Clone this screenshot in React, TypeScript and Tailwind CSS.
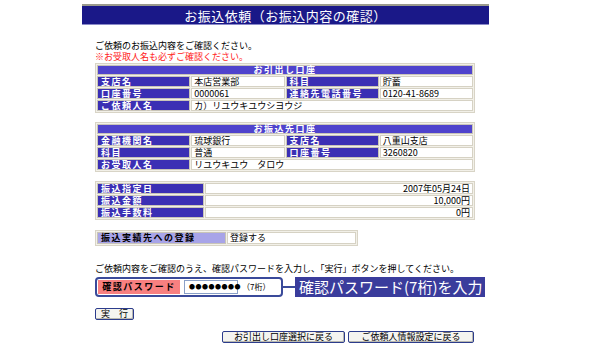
const font = "font-['MS_PGothic','Noto_Sans_CJK_JP',sans-serif]";

const labelCls =
  "bg-[#3b2fb4] text-white font-bold tracking-[1.5px] px-[3px] h-[9px] leading-[9px] border border-[#c8c4b8] whitespace-nowrap align-middle";
const valueCls =
  "bg-white text-black px-[2px] h-[9px] leading-[9px] border border-[#d6d2c4] whitespace-nowrap align-middle";
const headCls =
  "bg-[#4f43cc] text-white font-bold tracking-[1.5px] text-center h-[8px] leading-[8px] border border-[#c8c4b8]";

function Table({ children }: { children: React.ReactNode }) {
  return (
    <table className="w-[380px] border-separate border-spacing-[1px] bg-[#f2f0e8] border border-[#d8d4c6] table-fixed text-[9px]">
      <tbody>{children}</tbody>
    </table>
  );
}

function Button({ label, w }: { label: string; w: string }) {
  return (
    <button
      className={`${w} h-[12px] bg-[#f4f4f0] border border-[#2c3c8c] rounded-[2px] text-[9px] leading-[10px] text-black shadow-[inset_-1px_-1px_0_#b8b8b0] whitespace-nowrap`}
    >
      {label}
    </button>
  );
}

export default function App() {
  return (
    <div className={`w-[600px] h-[352px] bg-white overflow-hidden ${font} text-[9px] text-black`}>
      <div className="ml-[82px] w-[407px] pt-[4px]">
        <div className="h-[2px] bg-[#9a9a8c]" />
        <div className="h-[19px] bg-[#1a1888] border-b border-[#8a8ac8] text-white text-[13px] leading-[19px] text-center tracking-[0.5px]">
          お振込依頼（お振込内容の確認）
        </div>

        <div className="ml-[13px] mt-[15px]">
          <div className="leading-[11px]">ご依頼のお振込内容をご確認ください。</div>
          <div className="leading-[11px] text-[#ff2020]">※お受取人名も必ずご確認ください。</div>

          <div className="mt-[1px]">
            <Table>
              <tr>
                <td colSpan={4} className={headCls}>お引出し口座</td>
              </tr>
              <tr>
                <td className={`${labelCls} w-[62px]`}>支店名</td>
                <td className={`${valueCls} w-[124px]`}>本店営業部</td>
                <td className={`${labelCls} w-[94px]`}>科目</td>
                <td className={valueCls}>貯蓄</td>
              </tr>
              <tr>
                <td className={labelCls}>口座番号</td>
                <td className={valueCls}>0000061</td>
                <td className={labelCls}>連絡先電話番号</td>
                <td className={valueCls}>0120-41-8689</td>
              </tr>
              <tr>
                <td className={labelCls}>ご依頼人名</td>
                <td colSpan={3} className={valueCls}>カ）リユウキユウシヨウジ</td>
              </tr>
            </Table>
          </div>

          <div className="mt-[9px]">
            <Table>
              <tr>
                <td colSpan={4} className={headCls}>お振込先口座</td>
              </tr>
              <tr>
                <td className={`${labelCls} w-[112px]`}>金融機関名</td>
                <td className={`${valueCls} w-[76px]`}>琉球銀行</td>
                <td className={`${labelCls} w-[96px]`}>支店名</td>
                <td className={valueCls}>八重山支店</td>
              </tr>
              <tr>
                <td className={labelCls}>科目</td>
                <td className={valueCls}>普通</td>
                <td className={labelCls}>口座番号</td>
                <td className={valueCls}>3260820</td>
              </tr>
              <tr>
                <td className={labelCls}>お受取人名</td>
                <td colSpan={3} className={valueCls}>リユウキユウ　タロウ</td>
              </tr>
            </Table>
          </div>

          <div className="mt-[9px]">
            <Table>
              <tr>
                <td className={`${labelCls} w-[107px] !h-[8px]`}>振込指定日</td>
                <td className={`${valueCls} text-right !h-[8px]`}>2007年05月24日</td>
              </tr>
              <tr>
                <td className={`${labelCls} !h-[8px]`}>振込金額</td>
                <td className={`${valueCls} text-right !h-[8px]`}>10,000円</td>
              </tr>
              <tr>
                <td className={`${labelCls} !h-[8px]`}>振込手数料</td>
                <td className={`${valueCls} text-right !h-[8px]`}>0円</td>
              </tr>
            </Table>
          </div>

          <table className="mt-[10px] w-[263px] border-separate border-spacing-[1px] bg-[#f2f0e8] border border-[#d8d4c6] table-fixed text-[9px]">
            <tbody>
              <tr>
                <td className="w-[129px] bg-[#a8a4e8] text-black font-bold tracking-[1.5px] px-[3px] h-[10px] leading-[10px] border border-[#c8c4b8]">
                  振込実績先への登録
                </td>
                <td className="bg-white px-[2px] h-[10px] leading-[10px] border border-[#d6d2c4]">登録する</td>
              </tr>
            </tbody>
          </table>

          <div className="mt-[18px] leading-[10px] whitespace-nowrap">
            ご依頼内容をご確認のうえ、確認パスワードを入力し、「実行」ボタンを押してください。
          </div>

          <div className="mt-[3px] flex items-center">
            <div className="w-[188px] h-[20px] border-2 border-[#3a4a9a] rounded-[4px] flex items-center p-[1px]">
              <div className="w-[82px] h-full bg-[#f88080] font-bold tracking-[1.5px] flex items-center justify-center">
                確認パスワード
              </div>
              <div className="ml-[4px] w-[54px] h-[14px] bg-white border border-[#8aa0c8] flex items-center pl-[4px] text-[6px] tracking-[0.5px] leading-none">
                ●●●●●●●●
              </div>
              <div className="ml-[4px] text-[8px]">（7桁）</div>
            </div>
            <div className="w-[12px] h-[2px] bg-[#3a4a9a]" />
            <div className="w-[190px] h-[20px] bg-[#3a3c9c] text-white text-[15px] leading-[20px] pl-[4px] whitespace-nowrap">
              確認パスワード(7桁)を入力
            </div>
          </div>

          <div className="mt-[11px] flex">
            <Button label="実　行" w="w-[39px]" />
          </div>

          <div className="mt-[11px] ml-[127px] flex gap-[3px]">
            <Button label="お引出し口座選択に戻る" w="w-[123px]" />
            <Button label="ご依頼人情報設定に戻る" w="w-[126px]" />
          </div>
        </div>
      </div>
    </div>
  );
}
